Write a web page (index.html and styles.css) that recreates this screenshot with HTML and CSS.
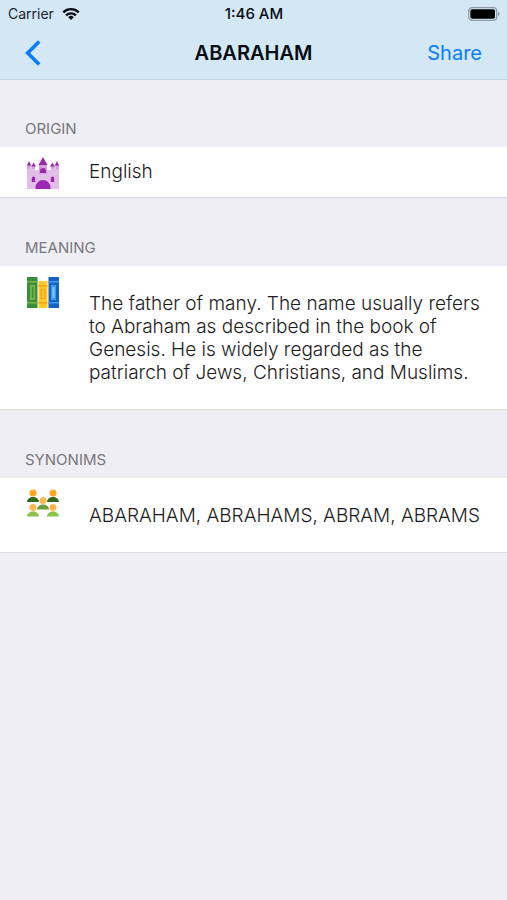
FILE: index.html
```html
<!DOCTYPE html>
<html lang="en">
<head>
<meta charset="utf-8">
<meta name="viewport" content="width=device-width, initial-scale=1">
<title>ABARAHAM</title>
<link rel="stylesheet" href="styles.css">
</head>
<body>
<header class="top">
  <div class="status">
    <div class="carrier">
      <span>Carrier</span>
      <svg width="18" height="14" viewBox="0 0 18 14" fill="none" stroke="#080d12" stroke-width="2.4" aria-hidden="true">
        <path d="M1.3 5.3a11 11 0 0 1 15.4 0"/>
        <path d="M4.1 8.4a7 7 0 0 1 9.8 0"/>
        <path d="M9 12.9l-2.8-2.7a4 4 0 0 1 5.6 0z" fill="#080d12" stroke="none"/>
      </svg>
    </div>
    <time class="clock">1:46 AM</time>
    <svg class="battery" width="32" height="14" viewBox="0 0 32 14" aria-hidden="true">
      <rect x="0.7" y="0.7" width="28" height="12.6" rx="3.4" fill="none" stroke="#8e9ba4" stroke-width="1.3"/>
      <rect x="2.4" y="2.3" width="24.6" height="9.4" rx="1.8" fill="#000"/>
      <path d="M30 5v4c1-.3 1.6-1.1 1.6-2S31 5.3 30 5z" fill="#8e9ba4"/>
    </svg>
  </div>
  <nav class="nav">
    <button class="back" type="button" aria-label="Back">
      <svg width="16" height="26" viewBox="0 0 16 26" fill="none" stroke="#087dff" stroke-width="3.6" aria-hidden="true"><path d="M14.200 1.500L2.700 13l11.500 11.500"/></svg>
    </button>
    <h1 class="title">ABARAHAM</h1>
    <button class="share" type="button">Share</button>
  </nav>
</header>
<main>
  <section>
    <h2 class="label label-first">ORIGIN</h2>
    <div class="row">
      <svg class="icon" viewBox="0 0 32 32" aria-hidden="true">
        <path fill="#e1bee7" d="M0 8h8v5h4V7h8v6h4V8h8v24H0z"/>
        <path fill="#ce93d8" d="M0 8h3v4H0zM5 8h3v4H5zM24 8h3v4h-3zM29 8h3v4h-3zM12 8h8v9h-8z" opacity=".7"/>
        <path fill="#9c27b0" d="M16 0l4.500 8h-9zM2 4l2.200 4.500H0zM6.500 5.500L9 9.500H4.400zM30 4l2 4.500h-4.200zM25.500 5.500l2.200 4H23zM8.500 32v-1.500a7.500 7.500 0 0 1 15 0V32z"/>
        <path fill="#9c27b0" d="M13 16v-2a3 3 0 0 1 6 0v2zM4.800 25v-3.800a1.700 1.700 0 0 1 3.400 0V25zM23.800 25v-3.800a1.700 1.700 0 0 1 3.400 0V25z"/>
      </svg>
      <p class="text">English</p>
    </div>
  </section>
  <section>
    <h2 class="label">MEANING</h2>
    <div class="row row-tall">
      <svg class="icon" viewBox="0 0 32 32" aria-hidden="true">
        <path fill="#388e3c" d="M0 1h10.500v31H0z"/>
        <path fill="#7cb342" d="M0 5h10.500v1.500H0zM0 26h10.500v1.500H0zM3 9h5v15H3z"/>
        <path fill="#388e3c" d="M4.800 11h1.600v11H4.800z"/>
        <path fill="#ffc928" d="M11.500 5h9v27h-9z"/>
        <path fill="#ff9f1c" d="M11.500 9h9v1.500h-9zM11.500 26h9v1.500h-9zM13.500 13h5v10h-5z"/>
        <path fill="#ffc928" d="M15 14h2v8h-2z"/>
        <path fill="#1565c0" d="M21.500 1H32v31H21.500z"/>
        <path fill="#3b9cf2" d="M21.500 5H32v1.500H21.500zM21.500 26H32v1.500H21.500zM24 9h5v15h-5z"/>
        <path fill="#82c8ff" d="M25.500 11h2v11h-2z"/>
      </svg>
      <p class="text">The father of many. The name usually refers to Abraham as described in the book of Genesis. He is widely regarded as the patriarch of Jews, Christians, and Muslims.</p>
    </div>
  </section>
  <section>
    <h2 class="label">SYNONIMS</h2>
    <div class="row row-tall">
      <svg class="icon" viewBox="0 0 32 32" aria-hidden="true">
        <g fill="#ffa726"><circle cx="6" cy="5" r="3.600"/><circle cx="26" cy="5" r="3.600"/></g>
        <path fill="#2e6b1e" d="M0 14c0-3 3-5 6-5s6 2 6 5zM20 14c0-3 3-5 6-5s6 2 6 5z"/>
        <g fill="#ffb74d"><circle cx="16" cy="12.500" r="3.500"/><circle cx="6" cy="19.500" r="3.500"/><circle cx="26" cy="19.500" r="3.500"/></g>
        <path fill="#689f38" d="M10 21.500c0-3 3-5 6-5s6 2 6 5z"/>
        <path fill="#8bc34a" d="M0 28.500c0-3 3-5 6-5s6 2 6 5zM20 28.500c0-3 3-5 6-5s6 2 6 5z"/>
      </svg>
      <p class="text">ABARAHAM, ABRAHAMS, ABRAM, ABRAMS</p>
    </div>
  </section>
</main>
</body>
</html>
```
FILE: styles.css
```css
* { box-sizing: border-box; }
body {
  margin: 0;
  min-height: 100vh;
  background: #efeef4;
  color: #1c1c1c;
  font-family: Inter, "Liberation Sans", sans-serif;
}
h1, h2, p { margin: 0; }
button {
  padding: 0;
  border: 0;
  background: none;
  font: inherit;
  color: #087dff;
  text-align: left;
}
svg { display: block; }
.top {
  background: #d3e7f5;
  border-bottom: 1px solid #c3d3e2;
}
.status, .nav {
  display: grid;
  grid-template-columns: 1fr auto 1fr;
  align-items: center;
}
.status {
  height: 27px;
  padding: 0 7px 0 8px;
  font-size: 14px;
  color: #1c242b;
}
.carrier { display: flex; align-items: center; gap: 8px; }
.clock { font-size: 15px; font-weight: 500; color: #080d12; }
.battery { justify-self: end; }
.nav { height: 52px; padding: 0 25px; }
.back { justify-self: start; }
.title { font-size: 20px; line-height: 24px; font-weight: 600; color: #080d12; }
.share { justify-self: end; font-size: 20px; line-height: 24px; }
.label {
  padding: 40px 25px 8px;
  font-size: 15px;
  line-height: 20px;
  font-weight: 400;
  color: #77777c;
}
.label-first { padding-top: 39px; }
.row {
  display: flex;
  align-items: flex-start;
  gap: 30px;
  padding: 10px 25px 8px 27px;
  background: #fff;
  border-bottom: 1px solid #dcdce0;
}
.icon { flex: none; width: 32px; height: 32px; }
.text {
  padding-top: 3px;
  font-size: 19px;
  line-height: 23px;
  font-weight: 300;
}
.row-tall .text { padding: 16px 0 17px; }
```
